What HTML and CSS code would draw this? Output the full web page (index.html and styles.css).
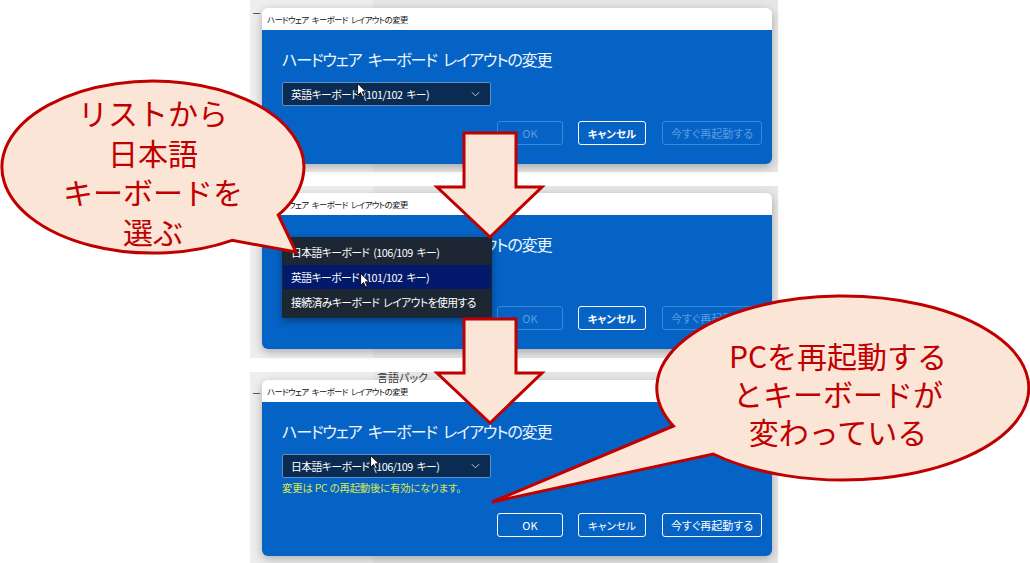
FILE: index.html
```html
<!DOCTYPE html>
<html lang="ja">
<head>
<meta charset="utf-8">
<title>キーボード レイアウトの変更</title>
<link rel="stylesheet" href="styles.css">
</head>
<body>
<div class="page">
  <div class="shots">
    <!-- Panel 1 -->
    <section class="shot shot1">
      <span class="bg-frag frag-left">ー</span>
      <div class="dialog">
        <div class="titlebar">ハードウェア キーボード レイアウトの変更</div>
        <div class="body">
          <h1 class="heading">ハードウェア キーボード レイアウトの変更</h1>
          <div class="select"><span>英語キーボード (101/102 キー)</span><svg class="chev" viewBox="0 0 10 6" width="9" height="6"><path d="M1 1 L5 5 L9 1" fill="none" stroke="#c9d8ea" stroke-width="1"/></svg></div>
          <div class="buttons">
            <div class="btn btn-ok disabled">OK</div>
            <div class="btn btn-cancel">キャンセル</div>
            <div class="btn btn-restart disabled">今すぐ再起動する</div>
          </div>
        </div>
      </div>
      <svg class="cursor cur1" viewBox="0 0 11 17" width="10" height="15"><path d="M0.5 0.5 L0.5 14 L3.8 10.8 L6.2 16 L8.2 15.1 L5.9 10 L10.2 10 Z" fill="#fff" stroke="#000" stroke-width="1"/></svg>
    </section>

    <!-- Panel 2 -->
    <section class="shot shot2">
      <div class="dialog">
        <div class="titlebar">ハードウェア キーボード レイアウトの変更</div>
        <div class="body">
          <h1 class="heading">ハードウェア キーボード レイアウトの変更</h1>
          <div class="select"><span>英語キーボード (101/102 キー)</span></div>
          <div class="buttons">
            <div class="btn btn-ok disabled">OK</div>
            <div class="btn btn-cancel">キャンセル</div>
            <div class="btn btn-restart disabled">今すぐ再起動する</div>
          </div>
          <ul class="menu">
            <li>日本語キーボード (106/109 キー)</li>
            <li class="selected">英語キーボード (101/102 キー)</li>
            <li>接続済みキーボード レイアウトを使用する</li>
          </ul>
        </div>
      </div>
      <svg class="cursor cur2" viewBox="0 0 11 17" width="10" height="15"><path d="M0.5 0.5 L0.5 14 L3.8 10.8 L6.2 16 L8.2 15.1 L5.9 10 L10.2 10 Z" fill="#fff" stroke="#000" stroke-width="1"/></svg>
    </section>

    <!-- Panel 3 -->
    <section class="shot shot3">
      <span class="bg-frag frag-left">ー</span>
      <span class="bg-frag frag-lang">言語パック</span>
      <div class="dialog">
        <div class="titlebar">ハードウェア キーボード レイアウトの変更</div>
        <div class="body">
          <h1 class="heading">ハードウェア キーボード レイアウトの変更</h1>
          <div class="select"><span>日本語キーボード (106/109 キー)</span><svg class="chev" viewBox="0 0 10 6" width="9" height="6"><path d="M1 1 L5 5 L9 1" fill="none" stroke="#c9d8ea" stroke-width="1"/></svg></div>
          <p class="note">変更は PC の再起動後に有効になります。</p>
          <div class="buttons">
            <div class="btn btn-ok">OK</div>
            <div class="btn btn-cancel">キャンセル</div>
            <div class="btn btn-restart">今すぐ再起動する</div>
          </div>
        </div>
      </div>
      <svg class="cursor cur3" viewBox="0 0 11 17" width="10" height="15"><path d="M0.5 0.5 L0.5 14 L3.8 10.8 L6.2 16 L8.2 15.1 L5.9 10 L10.2 10 Z" fill="#fff" stroke="#000" stroke-width="1"/></svg>
    </section>
  </div>

  <!-- Annotations -->
  <svg class="annot" viewBox="0 0 1030 563" width="1030" height="563">
    <g fill="#fbe5d6" stroke="#c00000" stroke-width="3" stroke-linejoin="miter">
      <polygon points="464,133 516,133 516,187 542,187 490,237 437,187 464,187"/>
      <polygon points="464,319 516,319 516,373 542,373 490,423 437,373 464,373"/>
      <path d="M278.3 215 L296 252 L232.1 240.3 A151 86 0 1 1 278.3 215 Z"/>
      <path d="M673.4 426 L492 502 L713.2 454 A186 92 0 1 0 673.4 426 Z"/>
    </g>
  </svg>
  <div class="callout-text callout-left">リストから<br>日本語<br>キーボードを<br>選ぶ</div>
  <div class="callout-text callout-right">PCを再起動する<br>とキーボードが<br>変わっている</div>
</div>
</body>
</html>
```

FILE: styles.css
```css
* { box-sizing: border-box; }
html, body { margin: 0; padding: 0; background: #fff; }
body { font-family: "Noto Sans CJK JP", "Noto Sans", sans-serif; }

.page {
  position: relative;
  width: 1030px;
  height: 563px;
  overflow: hidden;
  background: #fff;
}

.shots {
  display: flex;
  flex-direction: column;
  gap: 14px;
  margin-left: 250px;
  width: 528px;
}

.shot {
  position: relative;
  height: 172px;
  padding: 8px 0 0 12px;
  background: linear-gradient(90deg, #eeeeee 0, #eeeeee 122px, #e6e6e6 124px, #e6e6e6 100%);
}
.shot2 { padding-top: 7px; }
.shot3 { height: 191px; }

.bg-frag {
  position: absolute;
  font-size: 9px;
  color: #333;
  line-height: 1;
}
.frag-left { left: 2px; top: 9px; }
.shot3 .frag-left { top: 17px; }
.frag-lang { left: 127px; top: 0px; font-size: 11px; color: #3a3a3a; font-feature-settings: "palt"; }

.dialog {
  width: 510px;
  border-radius: 6px;
  box-shadow: 0 3px 10px rgba(0, 0, 0, 0.28);
  font-feature-settings: "palt";
}

.titlebar {
  height: 22px;
  background: #fff;
  border-radius: 6px 6px 0 0;
  padding-left: 5px;
  font-size: 8.4px;
  letter-spacing: -0.6px;
  word-spacing: 2px;
  line-height: 22px;
  color: #111;
  white-space: nowrap;
}

.body {
  position: relative;
  background: #0563c6;
  border-radius: 0 0 6px 6px;
  padding: 14px 10px 19px 20px;
  color: #fff;
}

.heading {
  margin: 0 0 8px;
  font-size: 16.2px;
  letter-spacing: -1.3px;
  word-spacing: 4px;
  font-weight: 400;
  line-height: 30px;
  color: #eef4fb;
  white-space: nowrap;
}

.select {
  width: 209px;
  height: 24px;
  background: #0b2c52;
  border: 1px solid #5f8ec4;
  border-radius: 2px;
  display: flex;
  align-items: center;
  justify-content: space-between;
  padding: 0 10px 0 8px;
  font-size: 10.8px;
  letter-spacing: -0.55px;
  word-spacing: 2px;
  color: #fff;
  white-space: nowrap;
}
.chev { display: block; }

.note {
  margin: 3px 0 0;
  height: 14px;
  font-size: 10.4px;
  letter-spacing: -0.2px;
  line-height: 14px;
  color: #dde64e;
  white-space: nowrap;
}

.buttons {
  display: flex;
  justify-content: flex-end;
  gap: 15px;
  margin-top: 15px;
}
.shot3 .buttons { margin-top: 18px; }

.btn {
  height: 24px;
  border: 1.5px solid #fff;
  border-radius: 3px;
  display: flex;
  align-items: center;
  justify-content: center;
  font-size: 10.5px;
  color: #fff;
  white-space: nowrap;
}
.btn-ok { width: 66px; font-size: 11px; }
.btn-cancel { width: 68px; font-weight: 700; }
.btn-restart { width: 100px; margin-left: 1px; font-size: 11px; }
.shot3 .btn-cancel { font-weight: 400; }
.btn.disabled {
  border-color: #3c88d8;
  color: #5b9be0;
  font-weight: 400;
}

.menu {
  position: absolute;
  left: 20px;
  top: 22px;
  width: 210px;
  margin: 0;
  padding: 3px 1px;
  list-style: none;
  background: #1c2733;
  box-shadow: 0 3px 8px rgba(0, 0, 0, 0.35);
  font-size: 10.8px;
  letter-spacing: -0.55px;
  word-spacing: 2px;
  color: #fff;
}
.menu li {
  height: 24px;
  line-height: 24px;
  padding-left: 8px;
  margin-bottom: 1px;
  white-space: nowrap;
}
.menu li.selected { background: #031a6c; }

.cursor {
  position: absolute;
  display: block;
}
.cur1 { left: 107px; top: 83px; }
.cur2 { left: 110px; top: 87px; }
.cur3 { left: 120px; top: 83px; }

.annot {
  position: absolute;
  left: 0;
  top: 0;
  pointer-events: none;
}

.callout-text {
  position: absolute;
  text-align: center;
  font-size: 30px;
  color: #c00000;
  white-space: nowrap;
  font-family: "Noto Sans CJK JP", sans-serif;
}
.callout-left {
  left: 2px;
  width: 302px;
  top: 93px;
  line-height: 39.5px;
}
.callout-right {
  left: 652px;
  width: 372px;
  top: 336px;
  line-height: 38px;
}
```
